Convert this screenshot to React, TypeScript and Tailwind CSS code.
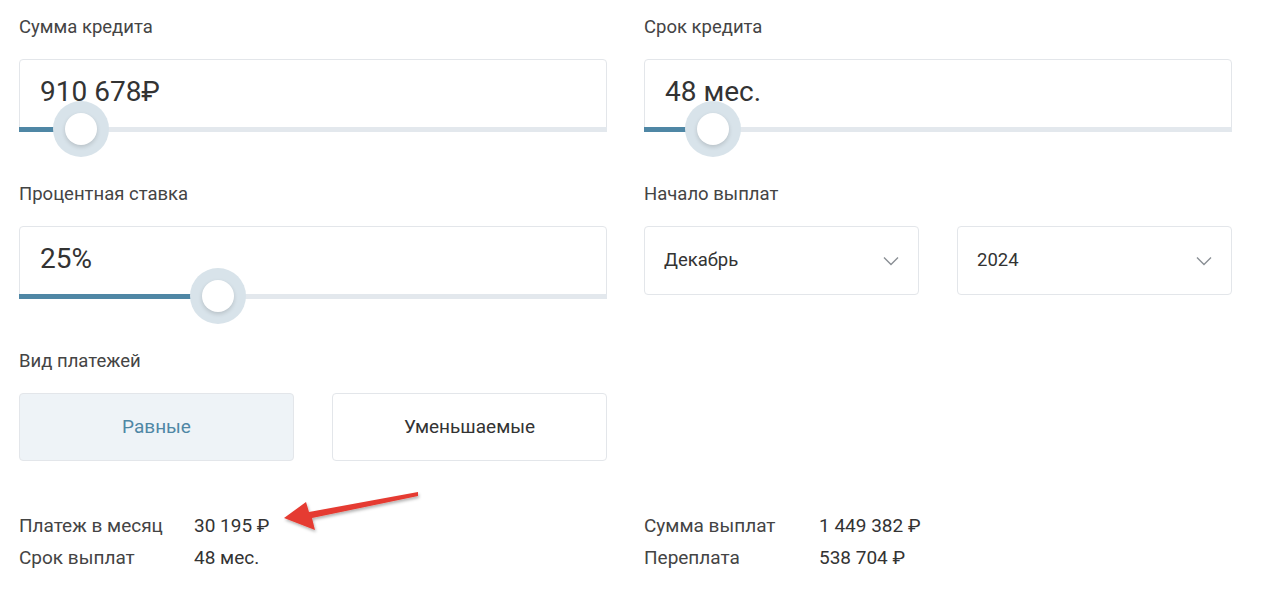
import React from "react";

function SliderBox({ value, pct, thumbX }: { value: string; pct: number; thumbX: number }) {
  return (
    <div className="relative h-[72px] rounded-[4px] border border-[#e3e6ea] bg-white">
      <div className="pl-[20px] pt-[16px] text-[28px] leading-[32px] text-[#333]">{value}</div>
      <div className="absolute left-[-1px] right-[-1px] bottom-[-2px] h-[5px] bg-[#e3e8ed]">
        <div className="h-full bg-[#4f87a5]" style={{ width: `${pct}px` }} />
        <div
          className="absolute top-[-26px] flex h-[56px] w-[56px] items-center justify-center rounded-full bg-[#d8e3ea]"
          style={{ left: `${thumbX - 28}px` }}
        >
          <div className="h-[32px] w-[32px] rounded-full bg-white shadow-[0_2px_4px_rgba(0,0,0,0.15)]" />
        </div>
      </div>
    </div>
  );
}

function Chevron() {
  return (
    <svg width="16" height="10" viewBox="0 0 16 10" fill="none" stroke="#8a8f95" strokeWidth="1.4">
      <path d="M1 1.5l7 7 7-7" />
    </svg>
  );
}

function Select({ text }: { text: string }) {
  return (
    <div className="flex h-[69px] flex-1 items-center justify-between rounded-[4px] border border-[#e3e6ea] px-[19px] text-[18.5px] text-[#333]">
      <span>{text}</span>
      <Chevron />
    </div>
  );
}

const label = "text-[18.5px] leading-[20px] text-[#444] mb-[22px]";

export default function App() {
  return (
    <div className="relative w-[1261px] h-[593px] bg-white px-[19px] pt-[17px]" style={{ fontFamily: "Roboto, sans-serif" }}>
      <div className="grid grid-cols-[588px_588px] gap-x-[37px]">
        <div>
          <div className={label}>Сумма кредита</div>
          <SliderBox value="910 678₽" pct={62} thumbX={62} />
        </div>
        <div>
          <div className={label}>Срок кредита</div>
          <SliderBox value="48 мес." pct={69} thumbX={69} />
        </div>
        <div className="mt-[53px]">
          <div className={label}>Процентная ставка</div>
          <SliderBox value="25%" pct={199} thumbX={199} />
        </div>
        <div className="mt-[53px]">
          <div className={label}>Начало выплат</div>
          <div className="flex gap-[38px]">
            <Select text="Декабрь" />
            <Select text="2024" />
          </div>
        </div>
        <div className="mt-[53px]">
          <div className={label}>Вид платежей</div>
          <div className="flex gap-[38px]">
            <div className="flex h-[68px] flex-1 items-center justify-center rounded-[4px] border border-[#e3e6ea] bg-[#eef3f7] text-[19px] text-[#4f87a5]">Равные</div>
            <div className="flex h-[68px] flex-1 items-center justify-center rounded-[4px] border border-[#e3e6ea] text-[19px] text-[#333]">Уменьшаемые</div>
          </div>
        </div>
        <div />
        <div className="mt-[53px] grid grid-cols-[175px_1fr] gap-y-[8px] text-[19px] leading-[24px] text-[#444]">
          <span>Платеж в месяц</span><span className="text-[#333]">30 195 ₽</span>
          <span>Срок выплат</span><span className="text-[#333]">48 мес.</span>
        </div>
        <div className="mt-[53px] grid grid-cols-[175px_1fr] gap-y-[8px] text-[19px] leading-[24px] text-[#444]">
          <span>Сумма выплат</span><span className="text-[#333]">1 449 382 ₽</span>
          <span>Переплата</span><span className="text-[#333]">538 704 ₽</span>
        </div>
      </div>
      <svg className="absolute left-[280px] top-[488px]" width="145" height="48" viewBox="0 0 145 48">
        <defs>
          <filter id="s" x="-10%" y="-30%" width="120%" height="160%">
            <feDropShadow dx="1" dy="2" stdDeviation="1.5" floodOpacity="0.3" />
          </filter>
        </defs>
        <path d="M138 4 L138 8 L32 30 L35 42 L4 30 L26 14 L29 24 Z" fill="#e53b30" filter="url(#s)" />
      </svg>
    </div>
  );
}
